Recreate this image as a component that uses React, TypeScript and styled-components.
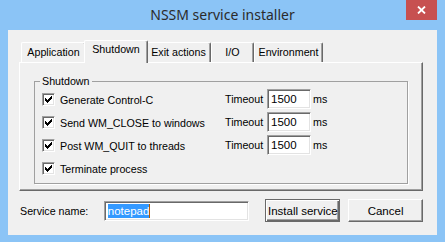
import { Fragment } from "react";
import styled, { createGlobalStyle } from "styled-components";

const GlobalStyle = createGlobalStyle`
  html, body { margin: 0; padding: 0; }
  body {
    width: 445px;
    height: 242px;
    overflow: hidden;
    background: #8bc4f6;
    font-family: "Liberation Sans", Arial, sans-serif;
    font-size: 10.7px;
    color: #000;
  }
`;

const Frame = styled.div`
  width: 445px;
  height: 242px;
  box-sizing: border-box;
  display: flex;
  flex-direction: column;
  background: #8bc4f6;
  padding: 0 8px 7px;
`;

const TitleBar = styled.div`
  height: 30px;
  flex: none;
  display: grid;
  grid-template-columns: 1fr auto 1fr;
  align-items: center;
`;

const Title = styled.div`
  grid-column: 2;
  font-family: "Noto Sans", "Open Sans", sans-serif;
  font-size: 14px;
  color: #2b2b2b;
  padding-bottom: 1px;
`;

const CloseButton = styled.div`
  grid-column: 3;
  justify-self: end;
  align-self: start;
  width: 31px;
  height: 20px;
  background: #c75050;
  display: flex;
  align-items: center;
  justify-content: center;
`;

const Client = styled.div`
  flex: 1;
  background: #f0f0f0;
  padding: 10px 14px 13px 11px;
  display: flex;
  flex-direction: column;
  gap: 8px;
`;

const TabControl = styled.div`
  display: flex;
  flex-direction: column;
`;

const TabStrip = styled.div`
  height: 22px;
  display: flex;
  align-items: flex-end;
  padding-left: 2px;
`;

const Tab = styled.div<{ $w: number; $active?: boolean }>`
  position: relative;
  box-sizing: border-box;
  width: ${(p) => (p.$active ? p.$w + 4 : p.$w)}px;
  height: ${(p) => (p.$active ? 23 : 20)}px;
  margin: ${(p) => (p.$active ? "0 -2px -1px" : "0")};
  z-index: ${(p) => (p.$active ? 2 : 1)};
  background: #f0f0f0;
  border-top: 1px solid #fff;
  border-left: 1px solid #fff;
  border-right: 1px solid #696969;
  border-radius: 2px 2px 0 0;
  box-shadow: inset -1px 0 #a0a0a0;
  text-align: center;
  line-height: ${(p) => (p.$active ? 16 : 18)}px;
  white-space: nowrap;
`;

const Panel = styled.div`
  height: 129px;
  box-sizing: border-box;
  border: 1px solid;
  border-color: #fff #696969 #696969 #fff;
  box-shadow: inset -1px -1px #a0a0a0;
  padding: 12px 14px 6px 14px;
  display: flex;
`;

const GroupBox = styled.fieldset`
  flex: 1;
  margin: 0;
  padding: 1px 7px 0;
  border: 1px solid #a0a0a0;
  box-shadow: 1px 1px 0 #fff;
  min-width: 0;
`;

const GroupLabel = styled.legend`
  margin-left: -2px;
  padding: 0 2px;
  line-height: 13px;
`;

const Rows = styled.div`
  display: grid;
  grid-template-columns: 183px 42px 44px auto;
  grid-auto-rows: 20px;
  row-gap: 3px;
  align-items: center;
`;

const CheckLabel = styled.label`
  grid-column: 1;
  display: flex;
  align-items: center;
  gap: 5px;
  padding-top: 1px;
`;

const CheckBox = styled.span`
  box-sizing: border-box;
  width: 13px;
  height: 13px;
  border: 1px solid;
  border-color: #a0a0a0 #fff #fff #a0a0a0;
  box-shadow: inset 1px 1px #696969, inset -1px -1px #e3e3e3;
  background: #fff;
  display: flex;
  align-items: center;
  justify-content: center;
`;

const Edit = styled.div<{ $w: number }>`
  box-sizing: border-box;
  width: ${(p) => p.$w}px;
  height: 20px;
  border: 1px solid;
  border-color: #a0a0a0 #fff #fff #a0a0a0;
  box-shadow: inset 1px 1px #696969, inset -1px -1px #e3e3e3;
  background: #fff;
  padding: 0 3px;
  display: flex;
  align-items: center;
  font-size: 11.5px;
`;

const Unit = styled.span`
  padding-left: 2px;
`;

const BottomRow = styled.div`
  height: 23px;
  display: flex;
  align-items: center;
  padding-left: 1px;
`;

const FieldLabel = styled.span`
  width: 84px;
`;

const Selected = styled.span`
  background: #3399ff;
  color: #fff;
  line-height: 14px;
  border-right: 1px solid #b05a00;
`;

const Button = styled.div<{ $default?: boolean }>`
  box-sizing: border-box;
  width: 75px;
  height: 23px;
  margin-left: ${(p) => (p.$default ? 16 : 8)}px;
  border: 1px solid;
  border-color: ${(p) =>
    p.$default ? "#696969" : "#fff #696969 #696969 #fff"};
  box-shadow: ${(p) =>
    p.$default
      ? "inset 1px 1px #fff, inset -1px -1px #696969, inset -2px -2px #a0a0a0"
      : "inset -1px -1px #a0a0a0"};
  background: #f0f0f0;
  display: flex;
  align-items: center;
  justify-content: center;
  font-size: 11.5px;
`;

const Check = () => (
  <svg width="7" height="7" viewBox="0 0 7 7" shapeRendering="crispEdges">
    <path
      d="M0 2h1v3h-1z M1 3h1v3h-1z M2 4h1v3h-1z M3 3h1v3h-1z M4 2h1v3h-1z M5 1h1v3h-1z M6 0h1v3h-1z"
      fill="#000"
    />
  </svg>
);

const tabs = [
  { label: "Application", w: 65 },
  { label: "Shutdown", w: 60, active: true },
  { label: "Exit actions", w: 65 },
  { label: "I/O", w: 43 },
  { label: "Environment", w: 69 },
];

const options = [
  { label: "Generate Control-C", timeout: "1500" },
  { label: "Send WM_CLOSE to windows", timeout: "1500" },
  { label: "Post WM_QUIT to threads", timeout: "1500" },
  { label: "Terminate process" },
];

function App() {
  return (
    <>
      <GlobalStyle />
      <Frame>
        <TitleBar>
          <Title>NSSM service installer</Title>
          <CloseButton>
            <svg width="9" height="8" viewBox="0 0 9 8">
              <path d="M1 0.5L8 7.5M8 0.5L1 7.5" stroke="#fff" strokeWidth="1.8" />
            </svg>
          </CloseButton>
        </TitleBar>
        <Client>
          <TabControl>
            <TabStrip>
              {tabs.map((t) => (
                <Tab key={t.label} $w={t.w} $active={t.active}>
                  {t.label}
                </Tab>
              ))}
            </TabStrip>
            <Panel>
              <GroupBox>
                <GroupLabel>Shutdown</GroupLabel>
                <Rows>
                  {options.map((o) => (
                    <Fragment key={o.label}>
                      <CheckLabel>
                        <CheckBox>
                          <Check />
                        </CheckBox>
                        {o.label}
                      </CheckLabel>
                      {o.timeout && (
                        <>
                          <span>Timeout</span>
                          <Edit $w={44}>{o.timeout}</Edit>
                          <Unit>ms</Unit>
                        </>
                      )}
                    </Fragment>
                  ))}
                </Rows>
              </GroupBox>
            </Panel>
          </TabControl>
          <BottomRow>
            <FieldLabel>Service name:</FieldLabel>
            <Edit $w={146}>
              <Selected>notepad</Selected>
            </Edit>
            <Button $default>Install service</Button>
            <Button>Cancel</Button>
          </BottomRow>
        </Client>
      </Frame>
    </>
  );
}

export default App;
